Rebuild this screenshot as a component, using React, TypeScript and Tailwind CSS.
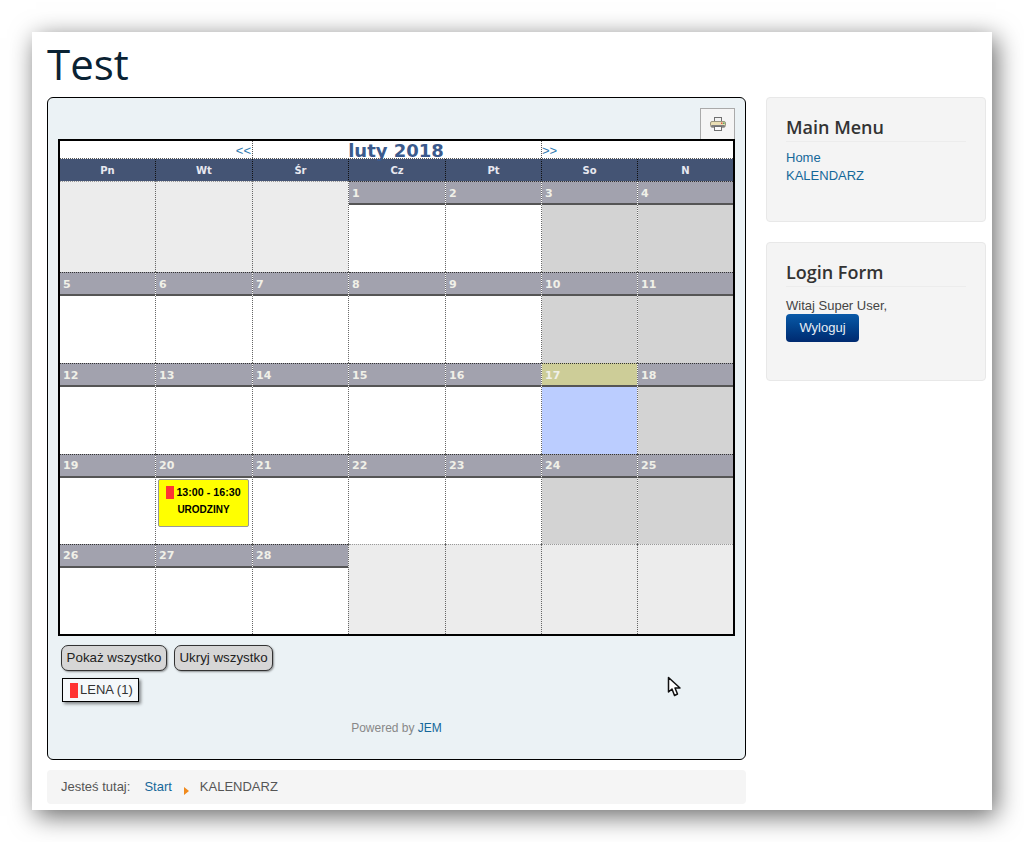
const days = ['Pn', 'Wt', 'Śr', 'Cz', 'Pt', 'So', 'N'];

type Cell = { day?: number; kind: 'empty' | 'normal' | 'weekend' | 'today'; event?: boolean };

const n = (day: number, kind: Cell['kind'] = 'normal', event = false): Cell => ({ day, kind, event });
const empty: Cell = { kind: 'empty' };

const weeks: { cells: Cell[]; body: string; lead: string }[] = [
  {
    body: 'h-[67px]',
    lead: 'leading-[24px]',
    cells: [empty, empty, empty, n(1), n(2), n(3, 'weekend'), n(4, 'weekend')],
  },
  {
    body: 'h-[67px]',
    lead: 'leading-[24px]',
    cells: [n(5), n(6), n(7), n(8), n(9), n(10, 'weekend'), n(11, 'weekend')],
  },
  {
    body: 'h-[67px]',
    lead: 'leading-[24px]',
    cells: [n(12), n(13), n(14), n(15), n(16), n(17, 'today'), n(18, 'weekend')],
  },
  {
    body: 'h-[66px]',
    lead: 'leading-[22px]',
    cells: [n(19), n(20, 'normal', true), n(21), n(22), n(23), n(24, 'weekend'), n(25, 'weekend')],
  },
  {
    body: 'h-[66px]',
    lead: 'leading-[22px]',
    cells: [n(26), n(27), n(28), empty, empty, empty, empty],
  },
];

function DayCell({ cell, first, body, lead }: { cell: Cell; first: boolean; body: string; lead: string }) {
  const side = first ? '' : 'border-l border-l-[#666] [border-left-style:dotted]';
  if (cell.kind === 'empty') {
    return (
      <div className={`bg-[#ececec] ${side}`}>
        <div className="h-6 border-t border-t-[#999] [border-top-style:dotted]" />
        <div className={body} />
      </div>
    );
  }
  const headBg = cell.kind === 'today' ? 'bg-[#cdcd98]' : 'bg-[#a2a2ae]';
  const bodyBg =
    cell.kind === 'weekend' ? 'bg-[#d3d3d3]' : cell.kind === 'today' ? 'bg-[#bbcdff]' : 'bg-white';
  return (
    <div className={side}>
      <div
        className={`h-6 ${headBg} border-t border-t-[#333] [border-top-style:dotted] border-b-2 border-b-[#555] pl-[3px] text-[11px] ${lead} font-bold text-[#f0f0e8] font-['DejaVu_Sans',sans-serif]`}
      >
        {cell.day}
      </div>
      <div className={`${body} ${bodyBg} pt-px`}>
        {cell.event && (
          <div className="ml-[2px] mr-[3px] h-[48px] rounded-[2px] border border-[#999] bg-[#ffff00] pt-[3px] text-center text-[10px] leading-[18px] font-bold text-black font-['Liberation_Sans',sans-serif]">
            <div className="flex items-center justify-center gap-[2px] text-[10.7px]">
              <span className="h-[13px] w-2 bg-[#ff3333]" />
              <span>13:00 - 16:30</span>
            </div>
            <div>URODZINY</div>
          </div>
        )}
      </div>
    </div>
  );
}

function Calendar() {
  return (
    <div className="border-2 border-black bg-white">
      <div className="grid h-[18px] grid-cols-[95px_97px_96px_97px_96px_96px_96px] border-b border-b-[#555] [border-bottom-style:dotted]">
        <div className="col-span-2 h-[17px] pr-px text-right text-[13px] leading-[20px] text-[#2f7ab0] font-['Liberation_Sans',sans-serif]">
          &lt;&lt;
        </div>
        <div className="col-span-3 h-[17px] border-l border-l-[#555] [border-left-style:dotted] pr-[2px] text-center text-[18px] leading-[20px] font-bold text-[#3b5a8c] font-['DejaVu_Sans',sans-serif]">
          luty 2018
        </div>
        <div className="col-span-2 h-[17px] border-l border-l-[#555] [border-left-style:dotted] text-[13px] leading-[20px] text-[#2f7ab0] font-['Liberation_Sans',sans-serif]">
          &gt;&gt;
        </div>
      </div>
      <div className="grid h-[22px] grid-cols-[95px_97px_96px_97px_96px_96px_96px] bg-[#445474]">
        {days.map((d, i) => (
          <div
            key={d}
            className={`text-center text-[10px] leading-[24px] font-bold text-[#e8e8f0] font-['DejaVu_Sans',sans-serif] border-b border-b-[#222] [border-bottom-style:dotted] ${i ? 'border-l border-l-[#111] [border-left-style:dotted]' : ''}`}
          >
            {d}
          </div>
        ))}
      </div>
      {weeks.map((w, i) => (
        <div key={i} className="grid grid-cols-[95px_97px_96px_97px_96px_96px_96px]">
          {w.cells.map((c, j) => (
            <DayCell key={j} cell={c} first={j === 0} body={w.body} lead={w.lead} />
          ))}
        </div>
      ))}
    </div>
  );
}

function PrinterIcon() {
  return (
    <svg width="16" height="14" viewBox="0 0 16 14">
      <rect x="4.5" y="0.5" width="7" height="4" fill="#f2f2f2" stroke="#707070" />
      <rect x="0.5" y="4.5" width="15" height="5.5" rx="1.5" fill="#eadfb4" stroke="#9a9680" />
      <rect x="11" y="5.5" width="1.5" height="1.5" fill="#e05a4a" />
      <rect x="13" y="5.5" width="1.5" height="1.5" fill="#5aa85a" />
      <rect x="1" y="8" width="14" height="2.5" rx="1" fill="#808080" />
      <rect x="4.5" y="9.5" width="7" height="4" fill="#fafafa" stroke="#707070" />
    </svg>
  );
}

function Cursor() {
  return (
    <svg className="absolute left-[667px] top-[676px]" width="16" height="22" viewBox="0 0 16 22">
      <path
        d="M1.5 1.5 V16 L5 13 L7.5 19.5 L10.5 18 L8 12 H13 Z"
        fill="#fff"
        stroke="#111"
        strokeWidth="1.5"
        strokeLinejoin="round"
      />
    </svg>
  );
}

function SideBox({ title, h, pad, children }: { title: string; h: string; pad: string; children: React.ReactNode }) {
  return (
    <div className={`${h} rounded-[4px] border border-[#e8e8e8] bg-[#f4f4f4] pl-[19px] pr-[19px] pt-[17px]`}>
      <h3 className="h-[27px] border-b border-[#ececec] text-[18px] leading-[24px] font-semibold text-[#333] font-['Open_Sans',sans-serif]">
        {title}
      </h3>
      <div className={`${pad} text-[13px] leading-[18px]`}>{children}</div>
    </div>
  );
}

export default function App() {
  return (
    <div className="relative h-[842px] w-[1024px] overflow-hidden bg-white font-['Liberation_Sans',sans-serif] pl-8 pt-8">
      <div className="h-[778px] w-[960px] bg-white pl-[15px] shadow-[4px_6px_24px_rgba(0,0,0,0.6)]">
        <h1 className="h-[65px] pt-[6px] text-[42px] leading-[52px] text-[#0a2233] font-['Open_Sans',sans-serif]">
          Test
        </h1>
        <div className="flex gap-5">
          <div className="w-[699px]">
            <div className="h-[663px] rounded-[6px] border border-black bg-[#ebf2f5] px-[10px] pt-[10px]">
              <div className="flex justify-end">
                <div className="flex h-[31px] w-[35px] items-center justify-center border border-[#aaa] border-b-0 bg-[#f5f5f5]">
                  <PrinterIcon />
                </div>
              </div>
              <Calendar />
              <div className="mt-[9px] flex gap-[7px] pl-[3px]">
                <button className="h-[26px] w-[106px] rounded-[7px] border border-[#333] bg-[#d6d6d6] text-[13.33px] text-[#222] shadow-[1px_1px_2px_rgba(0,0,0,0.4)]">
                  Pokaż wszystko
                </button>
                <button className="h-[26px] w-[99px] rounded-[7px] border border-[#333] bg-[#d6d6d6] text-[13.33px] text-[#222] shadow-[1px_1px_2px_rgba(0,0,0,0.4)]">
                  Ukryj wszystko
                </button>
              </div>
              <div className="mt-[7px] ml-[4px] flex h-[24px] w-[77px] items-center gap-[2px] border border-black bg-[#f5f8fa] pl-[7px] text-[13px] text-[#333] shadow-[2px_2px_3px_rgba(0,0,0,0.45)]">
                <span className="h-[15px] w-2 bg-[#ff3333]" />
                LENA (1)
              </div>
              <div className="mt-[19px] text-center text-[12px] leading-[14px] text-[#888]">
                Powered by <span className="text-[#15689a]">JEM</span>
              </div>
            </div>
            <div className="mt-[10px] flex h-[34px] items-center rounded-[4px] bg-[#f5f5f5] pl-[14px] text-[13px] text-[#555]">
              <span>Jesteś tutaj:</span>
              <span className="ml-[14px] text-[#15689a]">Start</span>
              <span className="ml-[12px] mt-[8px] h-0 w-0 border-y-[4px] border-l-[5px] border-y-transparent border-l-[#f08a1d]" />
              <span className="ml-[11px]">KALENDARZ</span>
            </div>
          </div>
          <div className="flex w-[220px] flex-col gap-5">
            <SideBox title="Main Menu" h="h-[125px]" pad="pt-[7px]">
              <div className="text-[#15689a]">Home</div>
              <div className="text-[#15689a]">KALENDARZ</div>
            </SideBox>
            <SideBox title="Login Form" h="h-[139px]" pad="pt-[10px]">
              <div className="h-[17px] text-[#444]">Witaj Super User,</div>
              <button className="block h-[28px] w-[73px] rounded-[4px] bg-gradient-to-b from-[#0a5aa8] to-[#002a70] text-[13px] text-[#e8eef5]">
                Wyloguj
              </button>
            </SideBox>
          </div>
        </div>
      </div>
      <Cursor />
    </div>
  );
}
